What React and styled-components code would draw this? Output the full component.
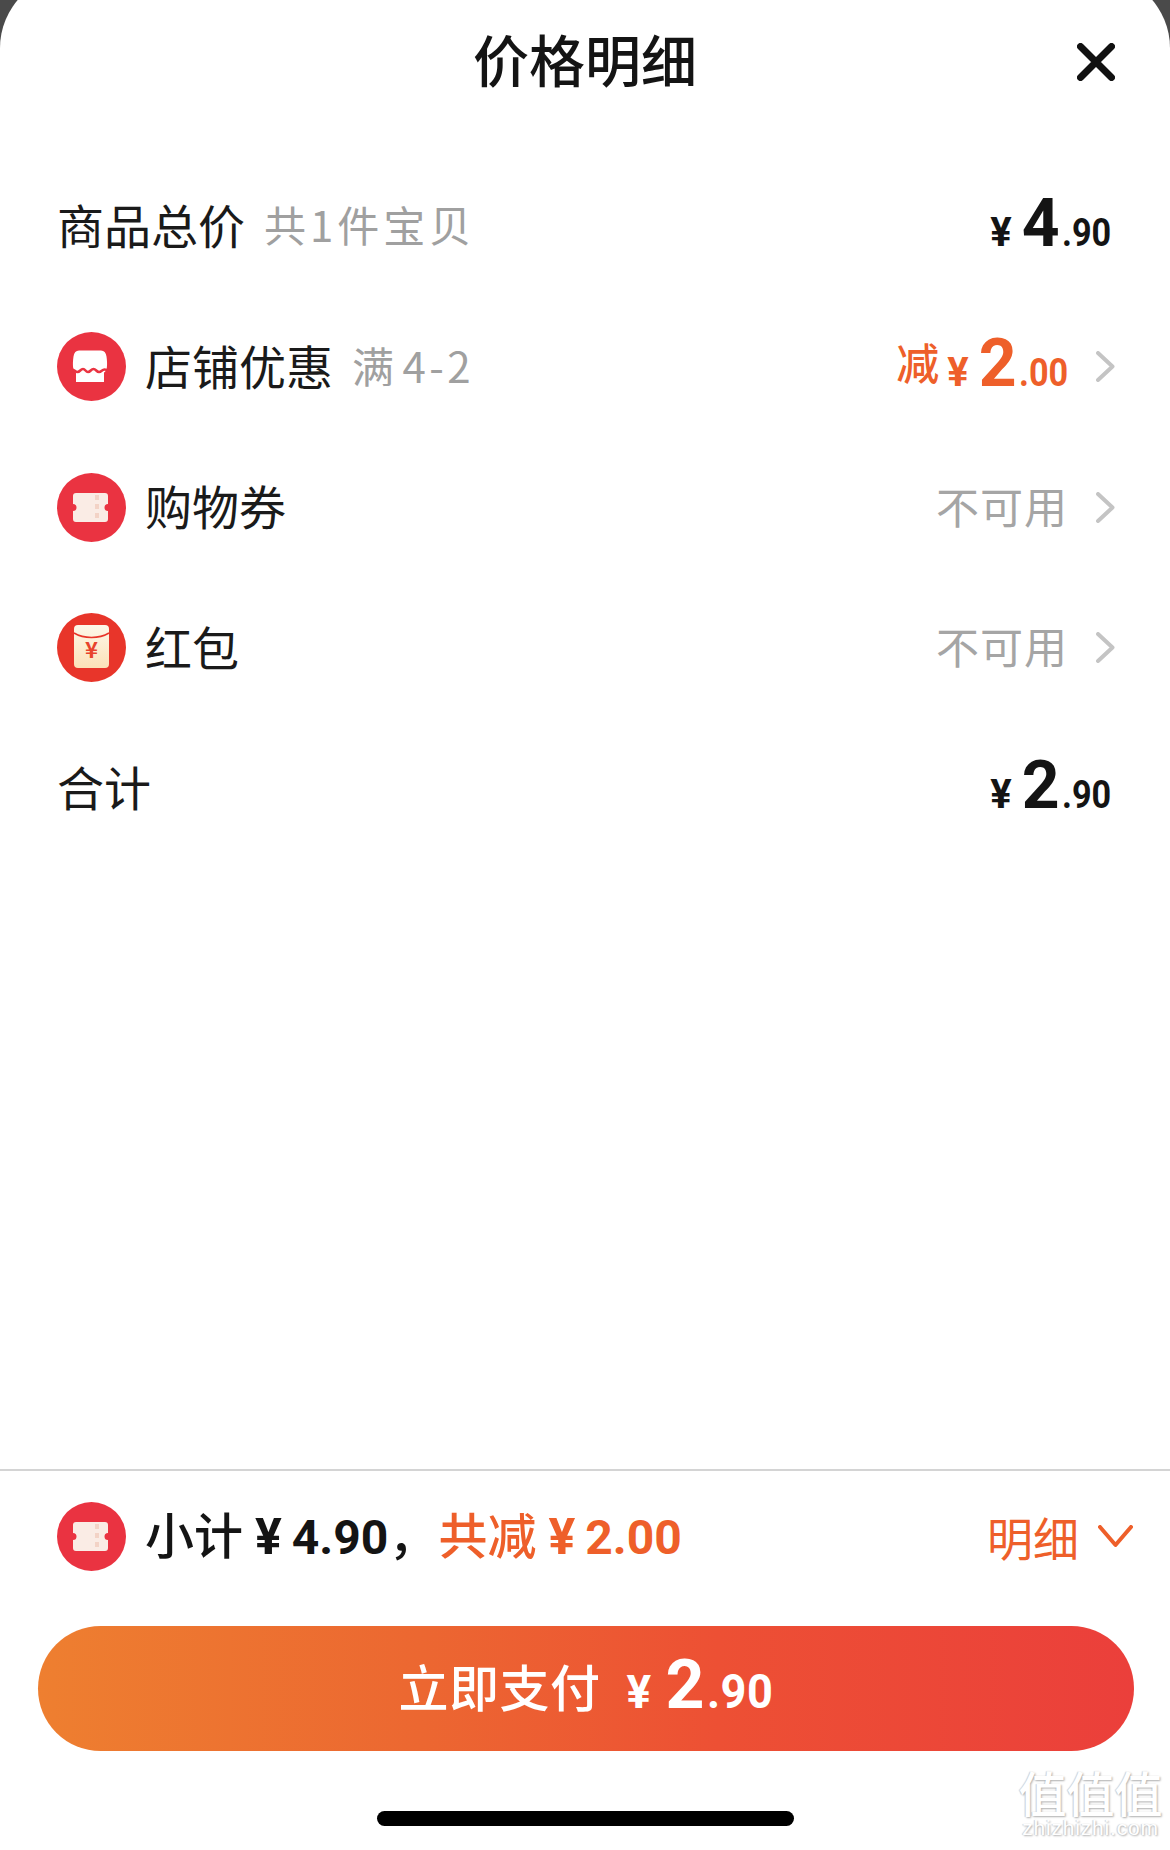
import React from "react";
import styled, { createGlobalStyle } from "styled-components";

const CJK = `"Noto Sans CJK SC", "Noto Sans", sans-serif`;
const DIGITS = `"Roboto", "Noto Sans CJK SC", sans-serif`;
const ORANGE = "#ee5f2a";

const GlobalStyle = createGlobalStyle`
  html, body {
    margin: 0;
    padding: 0;
    background: #4a4a4a;
    font-family: ${CJK};
  }
  html {
    height: 1850px;
    overflow: hidden;
  }
`;

// the sheet's top edge sits above the photographed area, only its curve shows
const Sheet = styled.div`
  position: relative;
  width: 1170px;
  height: 1876px;
  margin-top: -26px;
  padding-top: 26px;
  box-sizing: border-box;
  background: #fff;
  border-radius: 74px 74px 0 0;
  display: flex;
  flex-direction: column;
  overflow: hidden;
`;

const Header = styled.header`
  height: 124px;
  margin-bottom: 32px;
  padding: 0 55px;
  display: flex;
  align-items: center;
  justify-content: space-between;
`;

const HeaderSpacer = styled.div`
  width: 38px;
`;

const Title = styled.h1`
  margin: 0;
  padding-bottom: 9px;
  font-size: 56px;
  font-weight: 500;
  color: #141414;
`;

const List = styled.div`
  display: flex;
  flex-direction: column;
`;

const Row = styled.div`
  height: 140.5px;
  padding: 0 55px 0 57px;
  display: flex;
  align-items: center;
  box-sizing: border-box;
`;

const RowLabel = styled.span`
  padding-bottom: 5px;
  font-size: 47px;
  color: #1a1a1a;
  margin-left: ${(p) => (p.$icon ? "19px" : "0")};
`;

const RowNote = styled.span`
  padding-bottom: 5px;
  font-size: 42px;
  color: #a0a0a0;
  margin-left: 19px;
  letter-spacing: ${(p) => p.$spacing || 4}px;
  word-spacing: ${(p) => p.$words || 0}px;
`;

const RowRight = styled.div`
  margin-left: auto;
  display: flex;
  align-items: center;
`;

const Muted = styled.span`
  padding-bottom: 5px;
  font-size: 43px;
  color: #a5a5a5;
  letter-spacing: 1px;
`;

const Price = styled.span`
  display: inline-flex;
  align-items: baseline;
  padding-bottom: 5px;
  font-family: ${DIGITS};
  font-weight: 700;
  color: ${(p) => p.$color || "#141414"};
  margin-right: ${(p) => p.$gap || "4px"};
`;

const Num = styled.span`
  font-size: ${(p) => p.$size}px;
  margin-left: ${(p) => p.$left || 0}px;
  line-height: 1;
`;

// the screenshot's digits are a condensed face, so squeeze the cents
const Cents = styled.span`
  display: inline-block;
  font-size: ${(p) => p.$size}px;
  line-height: 1;
  margin-left: 2px;
  transform: scaleX(${(p) => p.$squeeze || 0.9});
  transform-origin: left center;
  margin-right: ${(p) => -(1 - (p.$squeeze || 0.9)) * 1.4}em;
`;

const Cut = styled.span`
  font-family: ${CJK};
  font-size: 43px;
  font-weight: 500;
  margin-right: 8px;
  transform: translateY(-6px);
`;

const Footer = styled.footer`
  margin-top: auto;
  border-top: 2px solid #d4d4d4;
  display: flex;
  flex-direction: column;
`;

const Summary = styled.div`
  height: 130px;
  margin-bottom: 25px;
  padding: 0 37px 0 57px;
  display: flex;
  align-items: center;
  box-sizing: border-box;
`;

const SummaryText = styled.span`
  display: flex;
  align-items: baseline;
  padding-bottom: 7px;
  margin-left: ${(p) => p.$left || 19}px;
  font-size: 49px;
  font-weight: 500;
  color: ${(p) => p.$color || "#141414"};
`;

const SummaryYen = styled.span`
  font-family: ${DIGITS};
  font-weight: 700;
  font-size: 50px;
  margin: 0 10px 0 12px;
`;

const SummaryDigits = styled.span`
  font-family: ${DIGITS};
  font-weight: 700;
  font-size: 48px;
`;

const DetailToggle = styled.div`
  margin-left: auto;
  display: flex;
  align-items: center;
  gap: 19px;
  font-size: 46px;
  color: ${ORANGE};
`;

const PayButton = styled.button`
  width: 1096px;
  height: 125px;
  margin: 0 36px 0 38px;
  border: 0;
  padding: 0;
  border-radius: 63px;
  background: linear-gradient(90deg, #ee7f30 0%, #ec6731 35%, #ed5034 62%, #eb3f3b 100%);
  display: flex;
  align-items: center;
  justify-content: center;
  color: #fff;
  font-family: ${CJK};
  font-size: 50px;
  font-weight: 500;
  letter-spacing: 0.5px;
`;

const PayLabel = styled.span`
  padding-bottom: 8px;
`;

const PayPrice = styled(Price)`
  margin-left: 26px;
  margin-right: 0;
  padding-bottom: 8px;
  color: #fff;
`;

const HomeBar = styled.div`
  width: 417px;
  height: 15px;
  margin: 60px auto 24px;
  border-radius: 8px;
  background: #000;
`;

const Watermark = styled.div`
  position: absolute;
  right: 7px;
  bottom: 10px;
  width: 145px;
  text-align: center;
  color: #fff;
  text-shadow: 1px 1px 2px #b0b0b0, -1px 0 1px #d0d0d0;
`;

const WatermarkMark = styled.div`
  font-size: 48px;
  line-height: 50px;
  font-weight: 500;
`;

const WatermarkUrl = styled.div`
  font-family: "Liberation Sans", Arial, sans-serif;
  font-size: 21px;
  line-height: 24px;
  letter-spacing: 0.8px;
`;

const RightArrow = styled.svg`
  margin-left: 28px;
`;

const ShopIcon = () => (
  <svg width="69" height="69" viewBox="0 0 69 69">
    <circle cx="34.5" cy="34.5" r="34.5" fill="#ea3341" />
    <path
      d="M25 18.500h19c3 0 5 2 5.500 6 .6 4 .8 8 .3 11.500-.4 2.500-1.800 4-2.800 4.500V50H19V40.500c-1-.5-2.400-2-2.800-4.500-.5-3.500-.3-7.500.3-11.500.5-4 2.500-6 5.500-6z"
      fill="#fff"
    />
    <path
      d="M15 37.500c2.500 0 3 2.500 5.500 2.500s3-3 5.500-3 2.500 3 5 3 3-3 5.500-3 3 3 5.500 3 3-2.500 5.500-2.500 3 1 3 1"
      fill="none"
      stroke="#ea3341"
      strokeWidth="2.500"
    />
  </svg>
);

const TicketIcon = () => (
  <svg width="69" height="69" viewBox="0 0 69 69">
    <circle cx="34.5" cy="34.5" r="34.5" fill="#ea3341" />
    <path
      d="M19 20h29a3 3 0 0 1 3 3v8a3.500 3.500 0 0 0 0 7v8a3 3 0 0 1-3 3H19a3 3 0 0 1-3-3v-8a3.500 3.500 0 0 0 0-7v-8a3 3 0 0 1 3-3z"
      fill="#faece5"
    />
    <path d="M40 22v26" stroke="#f3d3c6" strokeWidth="4" strokeDasharray="5 4" />
  </svg>
);

const EnvelopeIcon = () => (
  <svg width="69" height="69" viewBox="0 0 69 69">
    <defs>
      <linearGradient id="envelope" x1="0" y1="0" x2="0" y2="1">
        <stop offset="0" stopColor="#fdf7ea" />
        <stop offset="1" stopColor="#fce2b8" />
      </linearGradient>
    </defs>
    <circle cx="34.5" cy="34.5" r="34.5" fill="#e8352a" />
    <rect x="17" y="12" width="35" height="43" rx="4" fill="url(#envelope)" />
    <path d="M17 20c10 6 25 6 35 0" fill="none" stroke="#e8352a" strokeWidth="1.500" />
    <text x="34.500" y="45" fontSize="22" fontWeight="700" fill="#e8432c" textAnchor="middle" fontFamily="Noto Sans CJK SC">¥</text>
  </svg>
);

const ChevronRight = () => (
  <RightArrow width="19" height="31" viewBox="0 0 19 31">
    <path d="M2 2l14.500 13.500L2 29" fill="none" stroke="#c4c4c4" strokeWidth="4" strokeLinecap="round" strokeLinejoin="round" />
  </RightArrow>
);

const ChevronDown = () => (
  <svg width="35" height="23" viewBox="0 0 35 23">
    <path d="M2 2l15.500 18L33 2" fill="none" stroke={ORANGE} strokeWidth="4" strokeLinecap="round" strokeLinejoin="round" />
  </svg>
);

const CloseIcon = () => (
  <svg width="38" height="38" viewBox="0 0 38 38">
    <path d="M3.500 3.500l31 31M34.500 3.500l-31 31" stroke="#111" strokeWidth="7" strokeLinecap="round" />
  </svg>
);

function Amount({ whole, cents }) {
  return (
    <Price>
      <Num $size={40}>¥</Num>
      <Num $size={66} $left={10}>{whole}</Num>
      <Cents $size={38}>.{cents}</Cents>
    </Price>
  );
}

export default function App() {
  return (
    <>
      <GlobalStyle />
      <Sheet>
        <Header>
          <HeaderSpacer />
          <Title>价格明细</Title>
          <CloseIcon />
        </Header>
        <List>
          <Row>
            <RowLabel>商品总价</RowLabel>
            <RowNote>共1件宝贝</RowNote>
            <RowRight>
              <Amount whole="4" cents="90" />
            </RowRight>
          </Row>
          <Row>
            <ShopIcon />
            <RowLabel $icon>店铺优惠</RowLabel>
            <RowNote $spacing={3.5} $words={-8}>满 4-2</RowNote>
            <RowRight>
              <Price $color={ORANGE} $gap="0">
                <Cut>减</Cut>
                <Num $size={40}>¥</Num>
                <Num $size={66} $left={10}>2</Num>
                <Cents $size={38}>.00</Cents>
              </Price>
              <ChevronRight />
            </RowRight>
          </Row>
          <Row>
            <TicketIcon />
            <RowLabel $icon>购物券</RowLabel>
            <RowRight>
              <Muted>不可用</Muted>
              <ChevronRight />
            </RowRight>
          </Row>
          <Row>
            <EnvelopeIcon />
            <RowLabel $icon>红包</RowLabel>
            <RowRight>
              <Muted>不可用</Muted>
              <ChevronRight />
            </RowRight>
          </Row>
          <Row>
            <RowLabel>合计</RowLabel>
            <RowRight>
              <Amount whole="2" cents="90" />
            </RowRight>
          </Row>
        </List>
        <Footer>
          <Summary>
            <TicketIcon />
            <SummaryText>
              小计<SummaryYen>¥</SummaryYen><SummaryDigits>4.90</SummaryDigits>，
            </SummaryText>
            <SummaryText $color={ORANGE} $left={1}>
              共减<SummaryYen>¥</SummaryYen><SummaryDigits>2.00</SummaryDigits>
            </SummaryText>
            <DetailToggle>
              明细
              <ChevronDown />
            </DetailToggle>
          </Summary>
          <PayButton>
            <PayLabel>立即支付</PayLabel>
            <PayPrice>
              <Num $size={46}>¥</Num>
              <Num $size={68} $left={14}>2</Num>
              <Cents $size={48} $squeeze={0.94}>.90</Cents>
            </PayPrice>
          </PayButton>
          <HomeBar />
        </Footer>
        <Watermark>
          <WatermarkMark>值值值</WatermarkMark>
          <WatermarkUrl>zhizhizhi.com</WatermarkUrl>
        </Watermark>
      </Sheet>
    </>
  );
}
